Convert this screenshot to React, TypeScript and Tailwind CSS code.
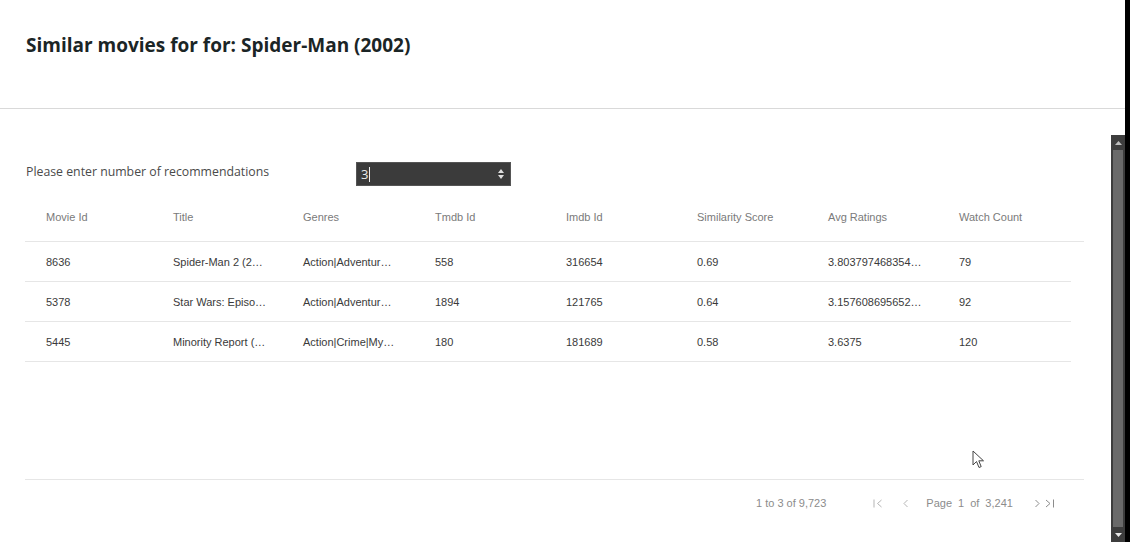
import React from "react";

const headers = ["Movie Id", "Title", "Genres", "Tmdb Id", "Imdb Id", "Similarity Score", "Avg Ratings", "Watch Count"];
const rows = [
  ["8636", "Spider-Man 2 (2…", "Action|Adventur…", "558", "316654", "0.69", "3.803797468354…", "79"],
  ["5378", "Star Wars: Episo…", "Action|Adventur…", "1894", "121765", "0.64", "3.157608695652…", "92"],
  ["5445", "Minority Report (…", "Action|Crime|My…", "180", "181689", "0.58", "3.6375", "120"],
];

const cols = "grid grid-cols-[127px_130px_132px_131px_131px_131px_131px_1fr]";

function Cursor() {
  return (
    <svg className="absolute left-[972px] top-[315px]" width="13" height="19" viewBox="0 0 13 19">
      <path d="M1 1 L1 15 L4.5 11.5 L7 17.5 L9.2 16.6 L6.8 10.8 L11.5 10.8 Z" fill="#fff" stroke="#444" strokeWidth="1" strokeLinejoin="round" />
    </svg>
  );
}

export default function App() {
  return (
    <div className="flex h-[542px] w-[1130px] overflow-hidden bg-white">
      <div className="flex min-w-0 flex-1 flex-col">
        <div className="h-[109px] border-b border-[#d9d9d9] pl-[26px] pt-[32px]">
          <h1 className="text-[19px] font-bold leading-[26px] text-[#1b2526] [font-family:'Open_Sans',sans-serif]">
            Similar movies for for: Spider-Man (2002)
          </h1>
        </div>
        <div className="flex flex-1 pt-[26px]">
          <div className="relative flex min-w-0 flex-1 flex-col">
            <div className="flex h-[58px] items-start pl-[26px] pt-[27px]">
              <span className="mt-[1px] w-[330px] text-[12.3px] leading-[18px] text-[#4a4a4a] [font-family:'Open_Sans',sans-serif]">
                Please enter number of recommendations
              </span>
              <div className="flex h-[24px] w-[155px] items-center border border-[#555] bg-[#3b3b3b] pl-[4px] pr-[6px]">
                <span className="text-[13px] leading-none text-[#e8e8e8] [font-family:'Open_Sans',sans-serif]">3</span>
                <span className="ml-[1px] h-[15px] w-px bg-[#eee]" />
                <div className="ml-auto flex flex-col items-center gap-[2px]">
                  <svg width="6" height="4" viewBox="0 0 6 4"><path d="M0 4 L3 0 L6 4 Z" fill="#e0e0e0" /></svg>
                  <svg width="6" height="4" viewBox="0 0 6 4"><path d="M0 0 L3 4 L6 0 Z" fill="#e0e0e0" /></svg>
                </div>
              </div>
            </div>
            <div className="ml-[25px] w-[1059px] text-[11px] [font-family:'Liberation_Sans',Arial,sans-serif]">
              <div className={`${cols} h-[49px] items-center border-b border-[#e6e6e6] pl-[21px] pt-[1px] text-[#7a7a7a]`}>
                {headers.map((h) => (
                  <div key={h}>{h}</div>
                ))}
              </div>
              <div className="h-[237px] w-[1046px]">
                {rows.map((r, i) => (
                  <div key={i} className={`${cols} h-[40px] items-center border-b border-[#e6e6e6] pl-[21px] pt-[1px] text-[#3a3a3a]`}>
                    {r.map((c, j) => (
                      <div key={j} className="whitespace-nowrap">{c}</div>
                    ))}
                  </div>
                ))}
              </div>
              <div className="flex h-[46px] items-center border-t border-[#e6e6e6] pt-[1px] text-[#8c8c8c]">
                <span className="ml-[731px]">1 to 3 of 9,723</span>
                <div className="ml-[47px] flex items-center">
                  <svg width="10" height="9" viewBox="0 0 10 9" className="mr-[20px]"><path d="M1 0.5 V8.5 M8.5 1 L4.5 4.5 L8.5 8" fill="none" stroke="#b5b5b5" strokeWidth="1" /></svg>
                  <svg width="5" height="9" viewBox="0 0 5 9" className="mr-[18px]"><path d="M4.5 1 L1 4.5 L4.5 8" fill="none" stroke="#b5b5b5" strokeWidth="1" /></svg>
                  <span className="flex gap-[6px]">
                    <span>Page</span>
                    <span>1</span>
                    <span>of</span>
                    <span>3,241</span>
                  </span>
                  <svg width="5" height="9" viewBox="0 0 5 9" className="ml-[22px]"><path d="M0.5 1 L4 4.5 L0.5 8" fill="none" stroke="#8c8c8c" strokeWidth="1" /></svg>
                  <svg width="10" height="9" viewBox="0 0 10 9" className="ml-[5px]"><path d="M1 1 L5 4.5 L1 8 M8.5 0.5 V8.5" fill="none" stroke="#8c8c8c" strokeWidth="1" /></svg>
                </div>
              </div>
            </div>
            <Cursor />
          </div>
          <div className="flex w-[14px] flex-col bg-[#3d3d3d]">
            <div className="flex h-[15px] items-center justify-center">
              <svg width="7" height="4" viewBox="0 0 7 4"><path d="M0 4 L3.5 0 L7 4 Z" fill="#bdbdbd" /></svg>
            </div>
            <div className="mx-[2px] flex-1 bg-[#6a6a6a]" />
            <div className="flex h-[15px] items-center justify-center">
              <svg width="7" height="4" viewBox="0 0 7 4"><path d="M0 0 L3.5 4 L7 0 Z" fill="#e8e8e8" /></svg>
            </div>
          </div>
        </div>
      </div>
      <div className="w-[5px] bg-black" />
    </div>
  );
}
